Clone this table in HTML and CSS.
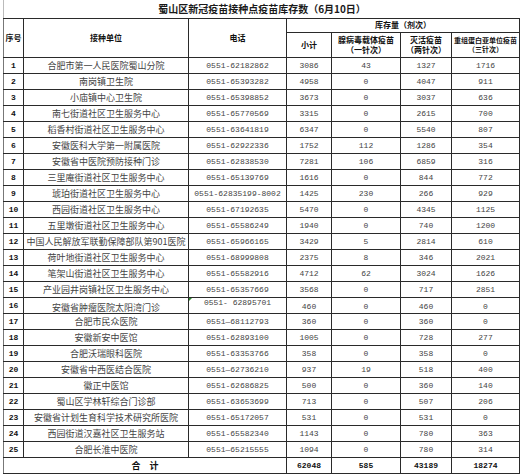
FILE: index.html
```html
<!DOCTYPE html>
<html lang="zh-CN">
<head>
<meta charset="utf-8">
<title>蜀山区新冠疫苗接种点疫苗库存数</title>
<link rel="stylesheet" href="styles.css">
</head>
<body>
<div class="sheet">
  <div class="title">蜀山区新冠疫苗接种点疫苗库存数（6月10日）</div>
  <table class="stock">
    <colgroup>
      <col class="c-seq"><col class="c-name"><col class="c-tel"><col class="c-sum"><col class="c-a"><col class="c-b"><col class="c-c">
    </colgroup>
    <thead>
      <tr class="h1">
        <th rowspan="2">序号</th>
        <th rowspan="2">接种单位</th>
        <th rowspan="2">电话</th>
        <th colspan="4">库存量（剂次）</th>
      </tr>
      <tr class="h2">
        <th>小计</th>
        <th>腺病毒载体疫苗<br>（一针次）</th>
        <th>灭活疫苗<br>（两针次）</th>
        <th class="tight">重组蛋白亚单位疫苗<br>（三针次）</th>
      </tr>
    </thead>
    <tbody>
      <tr><td class="seq">1</td><td class="name">合肥市第一人民医院蜀山分院</td><td class="num">0551-62182862</td><td class="num">3086</td><td class="num">43</td><td class="num">1327</td><td class="num">1716</td></tr>
      <tr><td class="seq">2</td><td class="name">南岗镇卫生院</td><td class="num">0551-65393282</td><td class="num">4958</td><td class="num">0</td><td class="num">4047</td><td class="num">911</td></tr>
      <tr><td class="seq">3</td><td class="name">小庙镇中心卫生院</td><td class="num">0551-65398852</td><td class="num">3673</td><td class="num">0</td><td class="num">3037</td><td class="num">636</td></tr>
      <tr><td class="seq">4</td><td class="name">南七街道社区卫生服务中心</td><td class="num">0551-65770569</td><td class="num">3315</td><td class="num">0</td><td class="num">2615</td><td class="num">700</td></tr>
      <tr><td class="seq">5</td><td class="name">稻香村街道社区卫生服务中心</td><td class="num">0551-63641819</td><td class="num">6347</td><td class="num">0</td><td class="num">5540</td><td class="num">807</td></tr>
      <tr><td class="seq">6</td><td class="name">安徽医科大学第一附属医院</td><td class="num">0551-62922336</td><td class="num">1752</td><td class="num">112</td><td class="num">1286</td><td class="num">354</td></tr>
      <tr><td class="seq">7</td><td class="name">安徽省中医院预防接种门诊</td><td class="num">0551-62838530</td><td class="num">7281</td><td class="num">106</td><td class="num">6859</td><td class="num">316</td></tr>
      <tr><td class="seq">8</td><td class="name">三里庵街道社区卫生服务中心</td><td class="num">0551-65139769</td><td class="num">1616</td><td class="num">0</td><td class="num">844</td><td class="num">772</td></tr>
      <tr><td class="seq">9</td><td class="name">琥珀街道社区卫生服务中心</td><td class="num">0551-62835199-8002</td><td class="num">1425</td><td class="num">230</td><td class="num">266</td><td class="num">929</td></tr>
      <tr><td class="seq">10</td><td class="name">西园街道社区卫生服务中心</td><td class="num">0551-67192635</td><td class="num">5470</td><td class="num">0</td><td class="num">4345</td><td class="num">1125</td></tr>
      <tr><td class="seq">11</td><td class="name">五里墩街道社区卫生服务中心</td><td class="num">0551-65586249</td><td class="num">1940</td><td class="num">0</td><td class="num">740</td><td class="num">1200</td></tr>
      <tr><td class="seq picked">12</td><td class="name">中国人民解放军联勤保障部队第901医院</td><td class="num">0551-65966165</td><td class="num">3429</td><td class="num">5</td><td class="num">2814</td><td class="num">610</td></tr>
      <tr><td class="seq">13</td><td class="name">荷叶地街道社区卫生服务中心</td><td class="num">0551-68999808</td><td class="num">2375</td><td class="num">8</td><td class="num">346</td><td class="num">2021</td></tr>
      <tr><td class="seq">14</td><td class="name">笔架山街道社区卫生服务中心</td><td class="num">0551-65582916</td><td class="num">4712</td><td class="num">62</td><td class="num">3024</td><td class="num">1626</td></tr>
      <tr><td class="seq">15</td><td class="name">产业园井岗镇社区卫生服务中心</td><td class="num">0551-65357669</td><td class="num">3568</td><td class="num">0</td><td class="num">717</td><td class="num">2851</td></tr>
      <tr class="low"><td class="seq">16</td><td class="name">安徽省肿瘤医院太阳湾门诊</td><td class="num top flagged">0551- 62895701</td><td class="num">460</td><td class="num">0</td><td class="num">460</td><td class="num">0</td></tr>
      <tr><td class="seq">17</td><td class="name">合肥市民众医院</td><td class="num">0551—68112793</td><td class="num">360</td><td class="num">0</td><td class="num">360</td><td class="num">0</td></tr>
      <tr><td class="seq">18</td><td class="name">安徽新安中医馆</td><td class="num">0551-62893100</td><td class="num">1005</td><td class="num">0</td><td class="num">728</td><td class="num">277</td></tr>
      <tr><td class="seq">19</td><td class="name">合肥沃瑞眼科医院</td><td class="num">0551-63353766</td><td class="num">358</td><td class="num">0</td><td class="num">358</td><td class="num">0</td></tr>
      <tr><td class="seq">20</td><td class="name">安徽省中西医结合医院</td><td class="num">0551—62736210</td><td class="num">937</td><td class="num">19</td><td class="num">518</td><td class="num">400</td></tr>
      <tr><td class="seq">21</td><td class="name">徽正中医馆</td><td class="num">0551-62686825</td><td class="num">500</td><td class="num">0</td><td class="num">360</td><td class="num">140</td></tr>
      <tr><td class="seq">22</td><td class="name">蜀山区学林轩综合门诊部</td><td class="num">0551-63653699</td><td class="num">713</td><td class="num">0</td><td class="num">507</td><td class="num">206</td></tr>
      <tr><td class="seq">23</td><td class="name">安徽省计划生育科学技术研究所医院</td><td class="num">0551-65172057</td><td class="num">531</td><td class="num">0</td><td class="num">531</td><td class="num">0</td></tr>
      <tr><td class="seq">24</td><td class="name">西园街道汉嘉社区卫生服务站</td><td class="num">0551-65582340</td><td class="num">1143</td><td class="num">0</td><td class="num">780</td><td class="num">363</td></tr>
      <tr><td class="seq">25</td><td class="name">合肥长淮中医院</td><td class="num">0551—65215555</td><td class="num">1094</td><td class="num">0</td><td class="num">780</td><td class="num">314</td></tr>
    </tbody>
    <tfoot>
      <tr><td colspan="3" class="total-label">合　计</td><td class="tnum">62048</td><td class="tnum">585</td><td class="tnum">43189</td><td class="tnum">18274</td></tr>
    </tfoot>
  </table>
</div>
</body>
</html>
```
FILE: styles.css
```css
html, body {
  margin: 0;
  padding: 0;
  background: #ffffff;
}

body {
  font-family: "Noto Sans CJK SC", sans-serif;
  color: #444;
}

.sheet {
  padding-left: 3px;
  width: 517px;
}

.title {
  height: 18px;
  line-height: 18px;
  text-align: center;
  font-size: 10px;
  font-weight: bold;
  color: #1a1a1a;
  border-left: 1px solid #bbb;
  box-sizing: border-box;
}

.stock {
  border-collapse: collapse;
  table-layout: fixed;
  width: 517px;
}

.c-seq { width: 20px; }
.c-name { width: 165px; }
.c-tel { width: 98px; }
.c-sum { width: 45px; }
.c-a { width: 69px; }
.c-b { width: 51px; }
.c-c { width: 68px; }

.stock th,
.stock td {
  border: 1px solid #2a2a2a;
  padding: 0;
  text-align: center;
  vertical-align: middle;
  white-space: nowrap;
  overflow: hidden;
  line-height: 1;
}

.stock th {
  font-size: 8px;
  font-weight: bold;
  color: #111;
  line-height: 1.3;
}

.stock th.tight {
  font-size: 7px;
}

.stock thead tr:first-child th:first-child,
.stock td.seq,
.stock td.total-label {
  border-left-color: #777;
}

.h1 { height: 14px; }
.h2 { height: 25px; }

.stock tbody tr { height: 16px; }
.stock tfoot tr { height: 16px; }

.seq {
  font-family: "Liberation Mono", monospace;
  font-size: 8px;
  font-weight: bold;
  color: #111;
}

.seq.picked {
  border-left: 1px solid #5cb85c;
}

.name {
  font-size: 9px;
  color: #444;
}

.num {
  font-family: "Liberation Mono", monospace;
  font-size: 8px;
  color: #444;
}

.low .name,
.low td:nth-child(n+4) {
  padding-top: 3px;
}

.num.top {
  vertical-align: top;
  padding-top: 1px;
}

.flagged {
  position: relative;
}

.flagged::before {
  content: "";
  position: absolute;
  left: 0;
  top: 0;
  border-top: 3px solid #2e8b2e;
  border-right: 3px solid transparent;
}

.total-label {
  font-size: 9px;
  font-weight: bold;
  color: #111;
}

.tnum {
  font-family: "Liberation Mono", monospace;
  font-size: 8px;
  font-weight: bold;
  color: #111;
}
```
